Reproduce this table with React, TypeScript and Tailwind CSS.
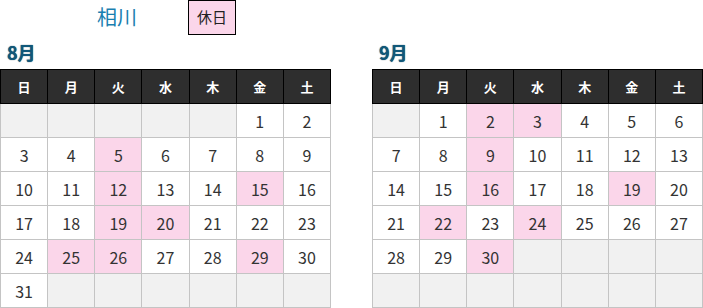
const days = ['日', '月', '火', '水', '木', '金', '土'];

type Month = {
  label: string;
  offset: number;
  count: number;
  holidays: number[];
};

const months: Month[] = [
  { label: '8月', offset: 5, count: 31, holidays: [5, 12, 15, 19, 20, 25, 26, 29] },
  { label: '9月', offset: 1, count: 30, holidays: [2, 3, 9, 16, 19, 22, 24, 30] },
];

// always 6 weeks so both tables line up
function buildWeeks(m: Month) {
  const cells: (number | null)[] = [];
  for (let i = 0; i < m.offset; i++) cells.push(null);
  for (let d = 1; d <= m.count; d++) cells.push(d);
  while (cells.length < 42) cells.push(null);
  const weeks: (number | null)[][] = [];
  for (let i = 0; i < cells.length; i += 7) weeks.push(cells.slice(i, i + 7));
  return weeks;
}

function MonthTable({ month }: { month: Month }) {
  const weeks = buildWeeks(month);
  return (
    <div className="w-[330px]">
      <h2 className="h-[34px] pl-[7px] pt-[2px] text-[18px] font-bold leading-[30px] text-[#10587a] [text-shadow:0_0_1px_#0a3347]">
        {month.label}
      </h2>
      <table className="w-[331px] table-fixed border-collapse">
        <thead>
          <tr>
            {days.map((d) => (
              <th
                key={d}
                className="h-[34px] border border-black bg-[#2e2e2e] p-0 text-center text-[13px] font-bold text-white"
              >
                {d}
              </th>
            ))}
          </tr>
        </thead>
        <tbody>
          {weeks.map((w, i) => (
            <tr key={i}>
              {w.map((d, j) => {
                const bg =
                  d === null
                    ? 'bg-[#f1f1f1]'
                    : month.holidays.includes(d)
                      ? 'bg-[#fbd6ea]'
                      : 'bg-white';
                return (
                  <td
                    key={j}
                    className={`h-[34px] border border-[#c4c4c4] p-0 text-center text-[16px] text-[#333] ${bg}`}
                  >
                    {d ?? ''}
                  </td>
                );
              })}
            </tr>
          ))}
        </tbody>
      </table>
    </div>
  );
}

export default function App() {
  return (
    <div className="w-[703px] bg-white font-['Noto_Sans_CJK_JP','Liberation_Sans',sans-serif]">
      <div className="flex h-[35px] items-start">
        <span className="ml-[97px] mt-[3px] text-[20px] leading-[28px] text-[#1a7fb0]">相川</span>
        <span className="ml-[51px] flex h-[35px] w-[48px] items-center justify-center border border-black bg-[#fbd6ea] text-[15px] text-[#222]">
          休日
        </span>
      </div>
      <div className="flex gap-[42px]">
        {months.map((m) => (
          <MonthTable key={m.label} month={m} />
        ))}
      </div>
    </div>
  );
}
